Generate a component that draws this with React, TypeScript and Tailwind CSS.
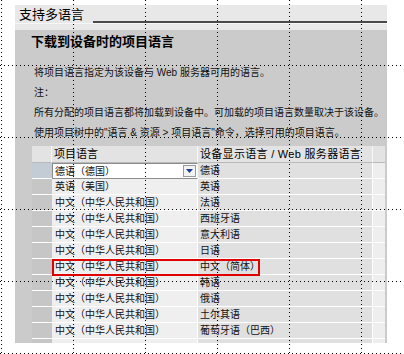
import React from "react";

const FONT = { fontFamily: '"Liberation Sans", "Noto Sans CJK SC", sans-serif' };

const rows: [string, string][] = [
  ["德语（德国）", "德语"],
  ["英语（美国）", "英语"],
  ["中文（中华人民共和国）", "法语"],
  ["中文（中华人民共和国）", "西班牙语"],
  ["中文（中华人民共和国）", "意大利语"],
  ["中文（中华人民共和国）", "日语"],
  ["中文（中华人民共和国）", "中文（简体）"],
  ["中文（中华人民共和国）", "韩语"],
  ["中文（中华人民共和国）", "俄语"],
  ["中文（中华人民共和国）", "土尔其语"],
  ["中文（中华人民共和国）", "葡萄牙语（巴西）"],
  ["", ""],
];

function DottedGrid() {
  const xs = [1, 73, 145, 217, 289, 361];
  const ys = [65, 137, 209, 281, 353];
  return (
    <svg
      className="absolute left-0 top-0 pointer-events-none"
      width={404}
      height={354}
      viewBox="0 0 404 354"
    >
      {xs.map((x) => (
        <line
          key={"x" + x}
          x1={x + 0.5}
          y1={0}
          x2={x + 0.5}
          y2={354}
          stroke="#000"
          strokeWidth={1}
          strokeDasharray="1 3"
        />
      ))}
      {ys.map((y) => (
        <line
          key={"y" + y}
          x1={0}
          y1={y + 0.5}
          x2={404}
          y2={y + 0.5}
          stroke="#000"
          strokeWidth={1}
          strokeDasharray="1 3"
        />
      ))}
    </svg>
  );
}

export default function App() {
  return (
    <div className="relative w-[404px] h-[354px] bg-white overflow-hidden text-black pt-[5px] pl-[15px]" style={FONT}>
      <div className="w-[372px] h-[338px] flex flex-col overflow-hidden">
        {/* Section header */}
        <div className="h-[25px] shrink-0 bg-[#e8e8e8] flex flex-col">
          <div className="h-[18px] shrink-0 flex items-center pl-[4px]">
            <span className="text-[13px] leading-[18px] mt-[2px]">支持多语言</span>
            <div className="flex-1 self-end h-[2px] bg-[#4a4a4a] ml-[9px]" />
          </div>
          <div className="h-[1px] bg-[#f6f6f6]" />
        </div>
        {/* Body */}
        <div className="flex-1 bg-[#cbcbcb] flex flex-col">
          <div className="pl-[16px] pt-[4px] text-[13px] leading-[16px] font-bold">下载到设备时的项目语言</div>
          <div className="pl-[19px] mt-[13px] text-[10px] leading-[20px] text-[#111]">
            <div>将项目语言指定为该设备与 Web 服务器可用的语言。</div>
            <div>注：</div>
            <div>所有分配的项目语言都将加载到设备中。可加载的项目语言数量取决于该设备。</div>
            <div>使用项目树中的"语言 &amp; 资源 &gt; 项目语言"命令，选择可用的项目语言。</div>
          </div>
          {/* Table */}
          <div className="relative ml-[17px] mt-[3px] w-[353px] flex flex-col">
            <div className="flex h-[17px] shrink-0 text-[11px] leading-[16px]">
              <div className="w-[20px] bg-[#e3e3e3] border-r border-[#f7f7f7] border-b border-b-[#b9b9b9]" />
              <div className="w-[146px] bg-[#e3e3e3] border-r border-[#f7f7f7] border-b border-b-[#b9b9b9] pl-[2px]">项目语言</div>
              <div className="w-[175px] bg-[#e3e3e3] border-r border-[#f7f7f7] border-b border-b-[#b9b9b9] pl-[2px] tracking-[0.3px]">设备显示语言 / Web 服务器语言</div>
              <div className="w-[12px] bg-[#e3e3e3] border-b border-b-[#b9b9b9]" />
            </div>
            {rows.map(([a, b], i) => (
              <div key={i} className="flex h-[16px] shrink-0 text-[10px] leading-[15px] text-[#111]">
                <div
                  className={
                    i === 0
                      ? "w-[20px] bg-[#c3cbd4] border-b border-white"
                      : "w-[20px] bg-[#c6c6c6] border-b border-white"
                  }
                />
                {i === 0 ? (
                  <div className="w-[146px] bg-white border border-[#8c8c8c] border-r-[#f7f7f7] flex items-center pl-[2px] pr-[1px]">
                    <span className="flex-1">{a}</span>
                    <div className="w-[13px] h-[12px] bg-[#f2f2f2] border border-[#9a9a9a] flex items-center justify-center">
                      <svg width="7" height="4" viewBox="0 0 7 4">
                        <polygon points="0,0 7,0 3.5,4" fill="#1c3a94" />
                      </svg>
                    </div>
                  </div>
                ) : (
                  <div className="w-[146px] bg-[#efefef] border-b border-r border-white pl-[3px]">{a}</div>
                )}
                <div className="w-[175px] bg-[#e0e0e0] border-b border-r border-white pl-[2px]">{b}</div>
                <div className="w-[12px] bg-[#eeeeee] border-b border-white" />
              </div>
            ))}
            <div className="absolute left-[20px] top-[113px] w-[208px] h-[17px] border-[2px] border-[#e00000]" />
          </div>
        </div>
      </div>
      <DottedGrid />
    </div>
  );
}
